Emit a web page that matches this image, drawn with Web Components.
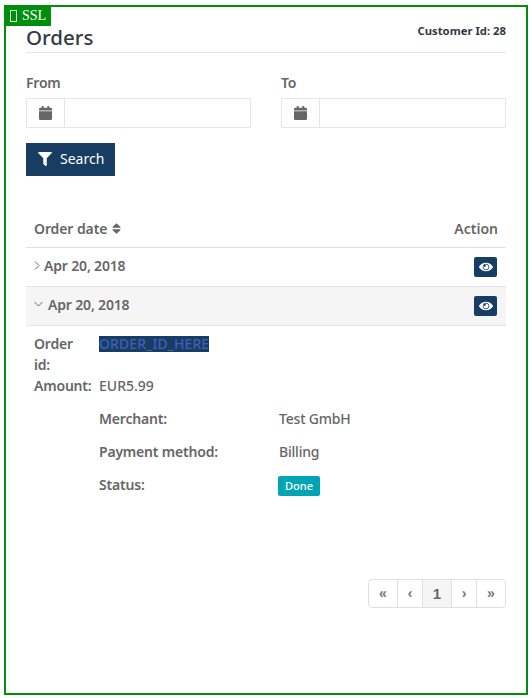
<!DOCTYPE html>
<html lang="en"><head><meta charset="utf-8"><title>Orders</title>
<style>
html,body{margin:0;padding:0;background:#fff}
body{font-family:"Noto Sans",sans-serif;font-size:14px;color:#666;line-height:21px}
</style></head><body>
<order-app></order-app>
<script>
const ICON={
calendar:['0 0 448 512','M12 192h424c6.6 0 12 5.4 12 12v260c0 26.5-21.5 48-48 48H48c-26.5 0-48-21.5-48-48V204c0-6.6 5.4-12 12-12zm436-44v-36c0-26.5-21.5-48-48-48h-48V12c0-6.6-5.4-12-12-12h-40c-6.6 0-12 5.4-12 12v52H160V12c0-6.6-5.4-12-12-12h-40c-6.6 0-12 5.4-12 12v52H48C21.5 64 0 85.5 0 112v36c0 6.6 5.4 12 12 12h424c6.6 0 12-5.4 12-12z'],
filter:['0 0 512 512','M487.976 0H24.028C2.71 0-8.047 25.866 7.058 40.971L192 225.941V432c0 7.831 3.821 15.17 10.237 19.662l80 55.98C298.02 518.69 320 507.493 320 487.98V225.941l184.947-184.97C520.021 25.896 509.338 0 487.976 0z'],
eye:['0 0 576 512','M569.354 231.631C512.969 135.949 407.81 72 288 72 168.14 72 63.004 135.994 6.646 231.631a47.999 47.999 0 0 0 0 48.739C63.031 376.051 168.19 440 288 440c119.86 0 224.996-63.994 281.354-159.631a47.997 47.997 0 0 0 0-48.738zM288 392c-75.162 0-136-60.827-136-136 0-75.162 60.826-136 136-136 75.162 0 136 60.826 136 136 0 75.162-60.826 136-136 136zm104-136c0 57.438-46.562 104-104 104s-104-46.562-104-104c0-17.708 4.431-34.379 12.236-48.973l-.001.032c0 23.651 19.173 42.823 42.824 42.823s42.824-19.173 42.824-42.823c0-23.651-19.173-42.824-42.824-42.824l-.032.001C253.621 156.431 270.292 152 288 152c57.438 0 104 46.562 104 104z'],
sort:['0 0 320 512','M41 288h238c21.4 0 32.1 25.9 17 41L177 448c-9.4 9.4-24.6 9.4-33.9 0L24 329c-15.1-15.1-4.4-41 17-41zm255-105L177 64c-9.4-9.4-24.6-9.4-33.9 0L24 183c-15.1 15.1-4.4 41 17 41h238c21.4 0 32.1-25.9 17-41z']
};
class FaIcon extends HTMLElement{
 connectedCallback(){
  const [vb,d]=ICON[this.getAttribute('name')];
  const w=this.getAttribute('w'),h=this.getAttribute('h');
  this.attachShadow({mode:'open'}).innerHTML=`<style>:host{display:inline-flex;line-height:0}svg{width:${w}px;height:${h}px;fill:currentColor;display:block}</style><svg viewBox="${vb}" preserveAspectRatio="none"><path d="${d}"/></svg>`;
 }
}
customElements.define('fa-icon',FaIcon);

class DateField extends HTMLElement{
 constructor(){super();this.attachShadow({mode:'open'}).innerHTML=`<style>
 :host{display:block;flex:1 1 0;min-width:0}
 label{display:block;font-weight:600;font-size:14px;letter-spacing:-.2px;line-height:21px;margin-bottom:5px}
 .g{display:flex;height:30px;box-sizing:border-box;border:1px solid #e6e6e6}
 .a{width:38px;box-sizing:border-box;flex:none;border-right:1px solid #e6e6e6;display:flex;align-items:center;justify-content:center;color:#666}
 </style><label><slot></slot></label><div class="g"><div class="a"><fa-icon name="calendar" w="13" h="14"></fa-icon></div></div>`}
}
customElements.define('date-field',DateField);

class OrderRow extends HTMLElement{
 constructor(){super();this.attachShadow({mode:'open'}).innerHTML=`<style>
 :host{display:flex;align-items:center;justify-content:space-between;height:38px;border-bottom:1px solid #e6e6e6;padding:0 9px 0 8px;font-weight:600;line-height:21px;letter-spacing:-.17px}
 :host([open]){background:#f5f5f5}
 .l{display:flex;align-items:center;padding-bottom:4px}
 svg{display:block;fill:none;stroke:#666;stroke-width:1}
 .c{width:6px;height:9px;margin-right:4px}
 :host([open]) .c{display:none}
 .o{width:9px;height:6px;margin-right:5px;display:none}
 :host([open]) .o{display:block}
 .b{width:23px;height:20px;border-radius:2px;background:#173d63;color:#fff;display:flex;align-items:center;justify-content:center}
 </style><div class="l"><svg class="c" viewBox="0 0 6 9"><path d="M1 .5 5 4.5 1 8.5"/></svg><svg class="o" viewBox="0 0 9 6"><path d="M.5 1 4.5 5 8.5 1"/></svg><slot></slot></div><div class="b"><fa-icon name="eye" w="14" h="12"></fa-icon></div>`}
}
customElements.define('order-row',OrderRow);

class OrderDetail extends HTMLElement{
 constructor(){super();this.attachShadow({mode:'open'}).innerHTML=`<style>
 :host{display:block;padding:7px 8px 0;font-weight:500}
 .top{display:grid;grid-template-columns:65px 1fr;line-height:21px}
 b{font-weight:600;letter-spacing:-.2px}
 .id{display:inline-block;color:#3f5fbd;background:#173d63;line-height:16px;margin-top:3px;vertical-align:top;letter-spacing:.1px}
 .sub{display:grid;grid-template-columns:180px 1fr;margin:12px 0 0 65px;row-gap:12px;line-height:21px;letter-spacing:-.2px}
 .badge{display:inline-block;background:#00a5b5;color:#fff;font-size:11px;line-height:20px;height:20px;border-radius:2px;padding:0 7px;margin-left:-1px;margin-top:2px;vertical-align:top;letter-spacing:0}
 </style>
 <div class="top"><b style="width:50px">Order id:</b><div><span class="id">ORDER_ID_HERE</span></div><b>Amount:</b><div>EUR5.99</div></div>
 <div class="sub"><b>Merchant:</b><div>Test GmbH</div><b>Payment method:</b><div>Billing</div><b>Status:</b><div><span class="badge">Done</span></div></div>`}
}
customElements.define('order-detail',OrderDetail);

class PageNav extends HTMLElement{
 constructor(){super();this.attachShadow({mode:'open'}).innerHTML=`<style>
 :host{display:flex;justify-content:flex-end}
 .p{display:flex;height:29px;box-sizing:border-box;border:1px solid #e0e0e0;border-radius:4px;font-family:"Liberation Sans",sans-serif;font-weight:700;color:#777;overflow:hidden}
 span{display:flex;align-items:center;justify-content:center;border-right:1px solid #e0e0e0;box-sizing:border-box;font-size:14px}
 span:last-child{border-right:0}
 .cur{background:#f5f5f5;color:#666;font-size:15px}
 </style><div class="p"><span style="width:29px">«</span><span style="width:25px">‹</span><span class="cur" style="width:29px">1</span><span style="width:25px">›</span><span style="width:28px">»</span></div>`}
}
customElements.define('page-nav',PageNav);

class OrderApp extends HTMLElement{
 constructor(){super();this.attachShadow({mode:'open'}).innerHTML=`<style>
 :host{display:block;box-sizing:border-box;width:524px;height:690px;margin:5px 0 0 4px;border:2px solid #008f0d;position:relative}
 .ssl{position:absolute;left:-1px;top:-1px;width:46px;height:20px;box-sizing:border-box;background:#008f0d;color:#fff;font:14px/18px "Liberation Serif",serif;padding-left:5px;white-space:nowrap;display:flex;align-items:center;gap:5px}
 .tofu{width:7px;height:12px;box-sizing:border-box;border:1px solid #d8efd8;flex:none}
 .c{padding:0 20px}
 .head{display:flex;justify-content:space-between;height:45px;border-bottom:1px solid #e6e6e6;box-sizing:content-box}
 h1{margin:0;font-size:20.5px;font-weight:500;line-height:28px;color:#343a40;padding-top:16px}
 .cid{font-size:11.3px;font-weight:700;color:#343a40;line-height:18px;padding-top:15px}
 .dates{display:flex;gap:30px;margin-top:19px}
 .btn{display:inline-flex;align-items:center;background:#173d63;color:#fff;height:33px;width:89px;box-sizing:border-box;padding:0 0 2px 12px;margin-top:15px;gap:8px;font-size:14px}
 .th{display:flex;justify-content:space-between;align-items:center;margin-top:32px;height:37px;padding:2px 8px 0;border-bottom:1px solid #e0e0e0;font-weight:600;letter-spacing:-.1px}
 .th div{display:flex;align-items:center;gap:5px}
 .th span{letter-spacing:0}
 page-nav{margin-top:83px}
 </style>
 <div class="ssl"><span class="tofu"></span>SSL</div>
 <div class="c">
  <div class="head"><h1>Orders</h1><div class="cid">Customer Id: 28</div></div>
  <div class="dates"><date-field>From</date-field><date-field>To</date-field></div>
  <div class="btn"><fa-icon name="filter" w="14" h="14"></fa-icon>Search</div>
  <div class="th"><div>Order date <fa-icon name="sort" w="9" h="13"></fa-icon></div><span>Action</span></div>
  <order-row>Apr 20, 2018</order-row>
  <order-row open>Apr 20, 2018</order-row>
  <order-detail></order-detail>
  <page-nav></page-nav>
 </div>`}
}
customElements.define('order-app',OrderApp);
</script>
</body></html>
